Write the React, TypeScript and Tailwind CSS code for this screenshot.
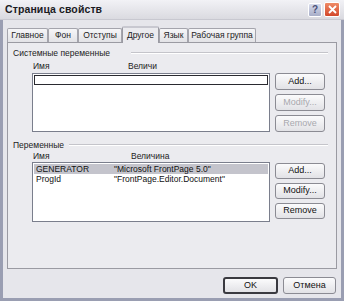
import React from "react";

const font = { fontFamily: '"Liberation Sans", Arial, sans-serif' };

function Btn({ label, disabled, def, w = "w-[50px]", h = "h-[17px]" }: { label: string; disabled?: boolean; def?: boolean; w?: string; h?: string }) {
  return (
    <div
      className={`${w} ${h} flex items-center justify-center rounded-[3px] text-[9px] bg-gradient-to-b from-[#fbfbfc] to-[#e2e2e6] ${
        def ? "border-2 border-[#3a3a40]" : "border border-[#8b8b93]"
      } ${disabled ? "text-[#a8a8ae]" : "text-[#111]"}`}
    >
      {label}
    </div>
  );
}

function GroupLabel({ text, lineW }: { text: string; lineW: string }) {
  return (
    <div className="h-[10px] flex items-center pl-[5px] pr-[8px]">
      <span className="text-[8.5px] leading-[10px] text-[#222]">{text}</span>
      <div className={`ml-auto ${lineW} h-[2px] border-t border-[#c4c4ca] border-b border-b-white`} />
    </div>
  );
}

export default function App() {
  const tabs = [
    { t: "Главное", w: "w-[41px]" },
    { t: "Фон", w: "w-[30px]" },
    { t: "Отступы", w: "w-[44px]" },
    { t: "Другое", w: "w-[37px]", sel: true },
    { t: "Язык", w: "w-[29px]" },
    { t: "Рабочая группа", w: "w-[68px]" },
  ];
  return (
    <div className="w-[344px] h-[301px] flex flex-col bg-[#9a9eb2] overflow-hidden" style={font}>
      {/* Title bar */}
      <div className="h-[20px] flex items-center pl-[5px] pr-[4px] bg-gradient-to-b from-[#f2f2f6] to-[#dadae0] border-b border-[#c8c8d0]">
        <span className="text-[10.5px] font-bold text-[#1b1b1f] tracking-[0.1px]">Страница свойств</span>
        <div className="ml-auto flex items-center gap-[2px]">
          <div className="w-[14px] h-[14px] rounded-[2px] border border-white bg-gradient-to-b from-[#d8dcec] to-[#a8aec8] flex items-center justify-center text-[10px] font-bold text-[#4a5078] leading-none">?</div>
          <div className="w-[16px] h-[15px] rounded-[2px] border border-white bg-gradient-to-b from-[#ee8a66] to-[#d2462a] flex items-center justify-center">
            <svg width="9" height="9" viewBox="0 0 9 9">
              <path d="M1 1 L8 8 M8 1 L1 8" stroke="white" strokeWidth="1.8" />
            </svg>
          </div>
        </div>
      </div>
      {/* Body */}
      <div className="flex-1 mx-[3px] mb-[3px] bg-[#e6e6eb] flex flex-col px-[4px]">
        {/* Tabs */}
        <div className="flex items-end h-[22px] relative z-10 text-[8.5px] text-[#222]">
          {tabs.map((tab) =>
            tab.sel ? (
              <div
                key={tab.t}
                className={`${tab.w} h-[17px] -mb-px flex items-center justify-center bg-[#ebebef] border border-b-0 border-[#9a9aa2] border-t-2 border-t-[#c8c8d0] rounded-t-[2px]`}
              >
                {tab.t}
              </div>
            ) : (
              <div
                key={tab.t}
                className={`${tab.w} h-[14px] flex items-center justify-center bg-gradient-to-b from-[#f6f6f8] to-[#e2e2e6] border border-b-0 border-[#a4a4ac] rounded-t-[2px]`}
              >
                {tab.t}
              </div>
            )
          )}
        </div>
        {/* Panel */}
        <div className="h-[227px] border border-[#9a9aa2] bg-[#ebebef] flex flex-col pt-[5px] text-[8.5px] text-[#222]">
          <GroupLabel text="Системные переменные" lineW="w-[197px]" />
          <div className="mt-[3px] h-[10px] flex items-center pl-[25px] leading-[10px]">
            <span className="w-[95px]">Имя</span>
            <span>Величи</span>
          </div>
          <div className="mt-[2px] flex pl-[24px]">
            <div className="w-[238px] h-[59px] border border-[#7a7e8c] bg-white p-px">
              <div className="h-[10px] border border-[#2a2a30]" />
            </div>
            <div className="ml-[5px] flex flex-col gap-[4px]">
              <Btn label="Add..." />
              <Btn label="Modify..." disabled />
              <Btn label="Remove" disabled />
            </div>
          </div>
          <div className="mt-[8px]">
            <GroupLabel text="Переменные" lineW="w-[259px]" />
          </div>
          <div className="mt-[1px] h-[10px] flex items-center pl-[25px] leading-[10px]">
            <span className="w-[98px]">Имя</span>
            <span>Величина</span>
          </div>
          <div className="mt-[1px] flex pl-[24px]">
            <div className="w-[238px] h-[60px] border border-[#7a7e8c] bg-white p-px text-[8.5px] text-[#111]">
              <div className="h-[10px] bg-[#c4c4cc] flex items-center pl-[2px]">
                <span className="w-[78px]">GENERATOR</span>
                <span>"Microsoft FrontPage 5.0"</span>
              </div>
              <div className="h-[11px] flex items-center pl-[2px]">
                <span className="w-[78px]">ProgId</span>
                <span>"FrontPage.Editor.Document"</span>
              </div>
            </div>
            <div className="ml-[5px] pt-px flex flex-col gap-[4px]">
              <Btn label="Add..." h="h-[16px]" />
              <Btn label="Modify..." h="h-[16px]" />
              <Btn label="Remove" h="h-[16px]" />
            </div>
          </div>
        </div>
        {/* Bottom buttons */}
        <div className="mt-[8px] flex justify-end gap-[5px] pr-px">
          <Btn label="OK" def w="w-[55px]" h="h-[17px]" />
          <Btn label="Отмена" w="w-[53px]" h="h-[17px]" />
        </div>
      </div>
    </div>
  );
}
